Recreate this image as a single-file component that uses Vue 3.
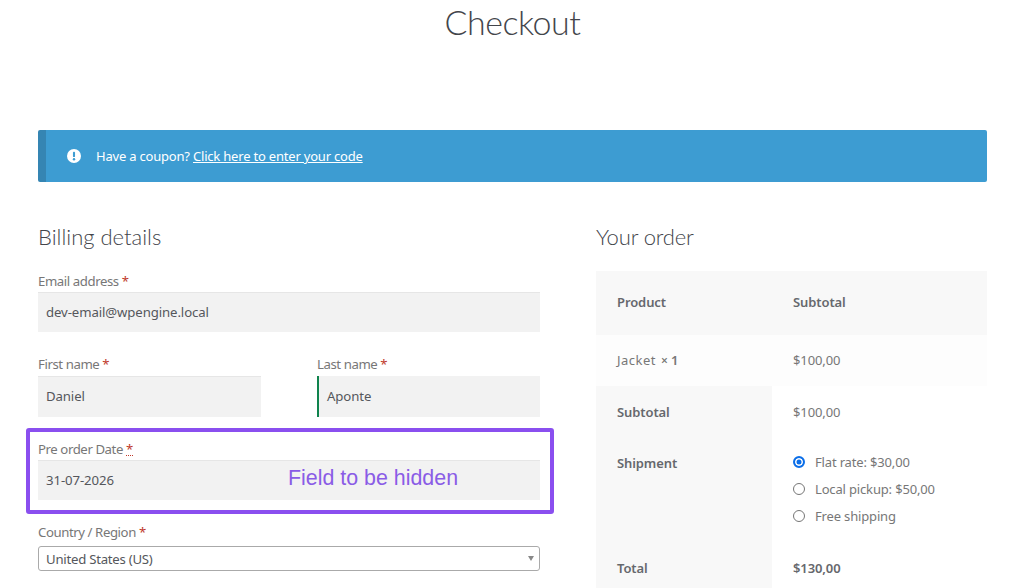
<script setup>
const shipping = [
  { label: 'Flat rate: $30,00', on: true },
  { label: 'Local pickup: $50,00', on: false },
  { label: 'Free shipping', on: false },
]
</script>

<template>
  <div class="page">
    <h1 class="title">Checkout</h1>

    <div class="notice">
      <svg class="notice-icon" viewBox="0 0 16 16" width="14" height="14">
        <circle cx="8" cy="8" r="8" fill="#fff" />
        <rect x="6.8" y="3.2" width="2.4" height="6" rx="1" fill="#3d9cd2" />
        <circle cx="8" cy="11.6" r="1.4" fill="#3d9cd2" />
      </svg>
      <span>Have a coupon? <a class="notice-link">Click here to enter your code</a></span>
    </div>

    <div class="columns">
      <section class="billing">
        <h2 class="heading">Billing details</h2>

        <div class="field email">
          <label>Email address <b>*</b></label>
          <div class="input">dev-email@wpengine.local</div>
        </div>

        <div class="name-row">
          <div class="field">
            <label>First name <b>*</b></label>
            <div class="input">Daniel</div>
          </div>
          <div class="field">
            <label>Last name <b>*</b></label>
            <div class="input active">Aponte</div>
          </div>
        </div>

        <div class="field date">
          <div class="frame"></div>
          <label>Pre order Date <b class="dotted">*</b></label>
          <div class="input">31-07-2026</div>
          <span class="annotation">Field to be hidden</span>
        </div>

        <div class="field country">
          <label>Country / Region <b>*</b></label>
          <div class="select">
            <span>United States (US)</span>
            <i class="caret"></i>
          </div>
        </div>
      </section>

      <section class="order">
        <h2 class="heading">Your order</h2>
        <div class="table">
          <div class="cell head strong">Product</div>
          <div class="cell head strong">Subtotal</div>

          <div class="cell item"><span class="product">Jacket</span><span class="qty"><span class="times">×</span> 1</span></div>
          <div class="cell item">$100,00</div>

          <div class="cell side strong sub">Subtotal</div>
          <div class="cell sub">$100,00</div>

          <div class="cell side strong ship">Shipment</div>
          <div class="cell ship options">
            <div v-for="opt in shipping" :key="opt.label" class="option">
              <span class="radio" :class="{ on: opt.on }"></span>
              <span>{{ opt.label }}</span>
            </div>
          </div>

          <div class="cell side strong total">Total</div>
          <div class="cell strong total">$130,00</div>
        </div>
      </section>
    </div>
  </div>
</template>

<style>
html, body { margin: 0; background: #fff; }
</style>

<style scoped>
.page {
  width: 1024px;
  height: 588px;
  overflow: hidden;
  box-sizing: border-box;
  padding: 0 37px 0 38px;
  font-family: "Noto Sans", "Open Sans", sans-serif;
  font-size: 14px;
  color: #6d6d6d;
  background: #fff;
}
.title {
  margin: 0;
  height: 130px;
  text-align: center;
  font-family: Lato, sans-serif;
  font-weight: 300;
  font-size: 34px;
  line-height: 43px;
  letter-spacing: -0.5px;
  color: #43454b;
}
.notice {
  display: flex;
  align-items: center;
  gap: 15px;
  height: 52px;
  box-sizing: border-box;
  padding-left: 21px;
  background: #3d9cd2;
  border-left: 8px solid #3585b3;
  border-radius: 2px;
  color: #fff;
  font-size: 13px;
  letter-spacing: -0.2px;
}
.notice-link { text-decoration: underline; }
.columns {
  display: grid;
  grid-template-columns: 502px 391px;
  column-gap: 56px;
  margin-top: 39px;
}
.heading {
  margin: 0;
  height: 50px;
  font-family: Lato, sans-serif;
  font-weight: 300;
  font-size: 22px;
  line-height: 32px;
  color: #43454b;
}
.order .heading { letter-spacing: -0.15px; }
.field { position: relative; }
label {
  display: block;
  height: 21px;
  font-size: 13.2px;
  line-height: 20px;
  color: #777;
  letter-spacing: -0.42px;
}
label b { color: #c0392b; font-weight: 400; }
.dotted { border-bottom: 1px dotted #c0392b; line-height: 12px; display: inline-block; }
.input {
  height: 40px;
  box-sizing: border-box;
  padding: 0 0 1px 8px;
  display: flex;
  align-items: center;
  background: #f2f2f2;
  border-top: 1px solid #e6e6e6;
  font-size: 13.2px;
  letter-spacing: -0.1px;
  color: #55575c;
}
.input.active {
  border-top: 0;
  border-left: 2px solid #0f834d;
}
.name-row {
  display: grid;
  grid-template-columns: 223px 223px;
  column-gap: 56px;
  margin-top: 22px;
}
.name-row label { height: 22px; }
.name-row .input { height: 41px; padding-bottom: 2px; }
.date { margin-top: 22px; }
.frame {
  position: absolute;
  left: -12px;
  right: -14px;
  top: -11px;
  bottom: -14px;
  border: 4px solid #8a4fef;
  border-radius: 3px;
}
.annotation {
  position: absolute;
  left: 250px;
  top: 26px;
  font-family: "Liberation Sans", sans-serif;
  font-size: 21.4px;
  line-height: 26px;
  color: #8a5ce6;
}
.country { margin-top: 22px; }
.country label { height: 24px; }
.select {
  position: relative;
  height: 25px;
  box-sizing: border-box;
  padding: 1px 0 0 7px;
  display: flex;
  align-items: center;
  border: 1px solid #aaa;
  border-radius: 3px;
  font-size: 13.2px;
  letter-spacing: -0.25px;
  color: #55575c;
}
.caret {
  position: absolute;
  right: 5px;
  top: 9px;
  border-left: 3.5px solid transparent;
  border-right: 3.5px solid transparent;
  border-top: 5px solid #888;
}
.table {
  display: grid;
  grid-template-columns: 176px 215px;
  grid-template-rows: 64px 51px 52px 104px 52px;
  font-size: 13px;
  letter-spacing: -0.1px;
}
.cell {
  box-sizing: border-box;
  display: flex;
  align-items: center;
  padding-left: 21px;
  color: #777;
}
.strong { font-weight: 600; color: #66686d; }
.head { background: #f8f8f8; padding-bottom: 2px; }
.item { background: #fdfdfd; padding-bottom: 2px; }
.side { background: #f8f8f8; }
.product { letter-spacing: 0.5px; }
.qty { font-weight: 600; margin-left: 5px; white-space: pre; }
.times { font-size: 12px; }
.ship { align-items: flex-start; padding-top: 16px; }
.options {
  flex-direction: column;
  align-items: flex-start;
  gap: 8px;
  padding-top: 14px;
  letter-spacing: -0.16px;
}
.option {
  display: flex;
  align-items: center;
  gap: 10px;
  height: 19px;
}
.radio {
  width: 12px;
  height: 12px;
  box-sizing: border-box;
  border: 1px solid #767676;
  border-radius: 50%;
  background: #fff;
}
.radio.on {
  border: 2px solid #0b6ee8;
  background: #0b6ee8;
  box-shadow: inset 0 0 0 1.5px #fff;
}
.total { padding-top: 0; }
</style>
